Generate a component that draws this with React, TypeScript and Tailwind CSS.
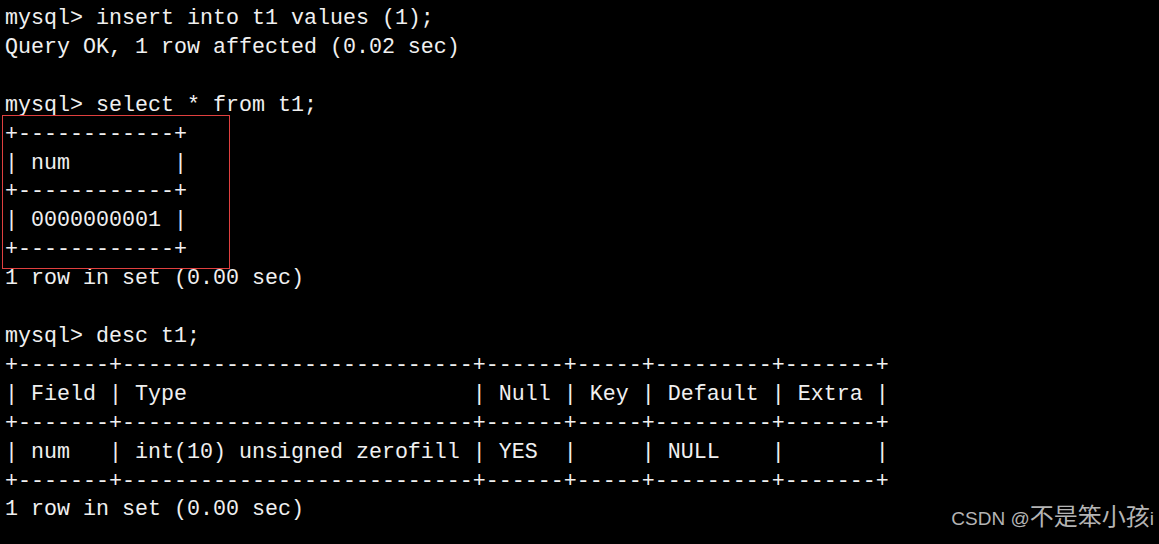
import React from "react";

const lines = [
  "mysql> insert into t1 values (1);",
  "Query OK, 1 row affected (0.02 sec)",
  "",
  "mysql> select * from t1;",
  "+------------+",
  "| num        |",
  "+------------+",
  "| 0000000001 |",
  "+------------+",
  "1 row in set (0.00 sec)",
  "",
  "mysql> desc t1;",
  "+-------+---------------------------+------+-----+---------+-------+",
  "| Field | Type                      | Null | Key | Default | Extra |",
  "+-------+---------------------------+------+-----+---------+-------+",
  "| num   | int(10) unsigned zerofill | YES  |     | NULL    |       |",
  "+-------+---------------------------+------+-----+---------+-------+",
  "1 row in set (0.00 sec)",
];

export default function App() {
  return (
    <div className="relative w-[1159px] h-[544px] bg-black overflow-hidden">
      <pre className="m-0 pl-[5px] pt-[5px] text-[#f0f0f0] text-[21.67px] leading-[28.92px] font-['Liberation_Mono','DejaVu_Sans_Mono',monospace] whitespace-pre">
        {lines.map((l, i) => (
          <div key={i} className="h-[28.92px]">
            {l}
          </div>
        ))}
      </pre>
      <div className="absolute left-[2px] top-[115px] w-[228px] h-[154px] border border-[#e0403f]" />
      <div className="absolute right-[5px] bottom-[11px] flex items-baseline text-[#b4b4b4] whitespace-nowrap">
        <span className="text-[19px] font-['Liberation_Sans',Arial,sans-serif]">CSDN @</span>
        <span className="text-[24px] font-['Noto_Sans_CJK_SC',sans-serif] leading-none">不是笨小孩</span>
        <span className="text-[19px] font-['Liberation_Sans',Arial,sans-serif]">i</span>
      </div>
    </div>
  );
}
